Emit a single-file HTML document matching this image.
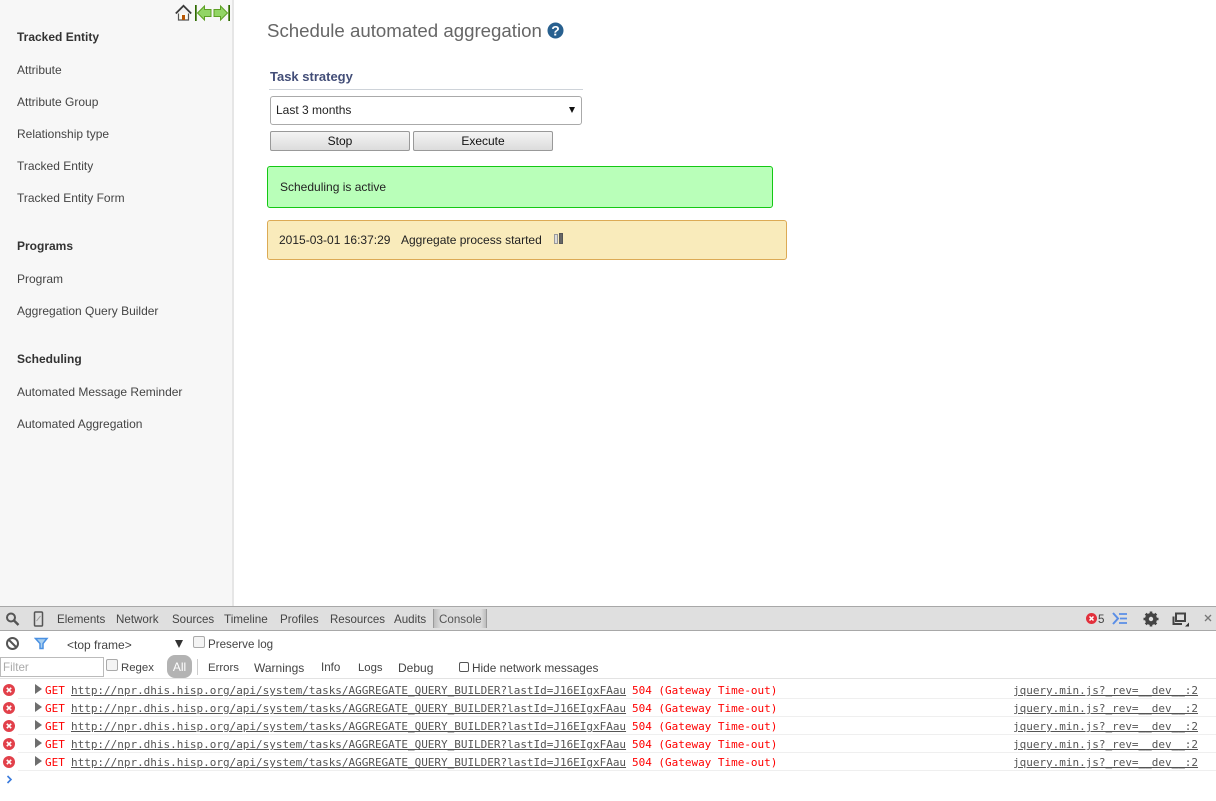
<!DOCTYPE html>
<html><head><meta charset="utf-8"><title>Schedule automated aggregation</title>
<style>
html,body{margin:0;padding:0;background:#fff}
body{width:1216px;height:801px;overflow:hidden;position:relative;font-family:"Liberation Sans",sans-serif;font-size:12px;color:#222}
.a{position:absolute;white-space:nowrap}
#side{position:absolute;left:0;top:0;width:232px;height:606px;background:#f7f7f7;border-right:2px solid #e6e6e6}
.n{position:absolute;left:17px;color:#444;font-size:12px;line-height:14px;white-space:nowrap}
.h{position:absolute;left:17px;color:#333;font-size:12px;font-weight:bold;line-height:14px;white-space:nowrap}
.btn{position:absolute;top:131px;height:18px;border:1px solid #999;border-radius:2px;background:linear-gradient(#f4f4f4,#dcdcdc);text-align:center;line-height:19px;color:#111}
.dt{position:absolute;color:#444;font-size:11.6px;line-height:14px;white-space:nowrap}
.row{position:absolute;left:0;width:1216px;height:18px;font-family:"DejaVu Sans Mono",monospace;font-size:11px;letter-spacing:-.015px;line-height:18px;white-space:pre}
.row span,.row u{position:absolute;top:1px}
.row svg{position:absolute;top:0}
.row u{color:#555}
.row .r{color:#f00}
.ln{position:absolute;left:18px;width:1198px;height:1px;background:#efefef}
.cb{position:absolute;width:10px;height:10px;border:1px solid #aaa;border-radius:2px;background:#f4f4f4}
</style></head><body>
<div id="side">
<div class="h" style="top:30px">Tracked Entity</div>
<div class="n" style="top:63px">Attribute</div>
<div class="n" style="top:95px">Attribute Group</div>
<div class="n" style="top:127px">Relationship type</div>
<div class="n" style="top:159px">Tracked Entity</div>
<div class="n" style="top:191px">Tracked Entity Form</div>
<div class="h" style="top:239px">Programs</div>
<div class="n" style="top:272px">Program</div>
<div class="n" style="top:304px">Aggregation Query Builder</div>
<div class="h" style="top:352px">Scheduling</div>
<div class="n" style="top:385px">Automated Message Reminder</div>
<div class="n" style="top:417px">Automated Aggregation</div>
</div>
<svg class="a" style="left:174px;top:3px" width="58" height="19" viewBox="0 0 58 19">
<path d="M4.500 10 V17 H14.500 V10" fill="#fbfaf2" stroke="#555" stroke-width="1.200"/>
<path d="M1.800 10.500 L9.500 2.800 L17.200 10.500" fill="#f2f2f2" stroke="#3a3a3a" stroke-width="1.800"/>
<rect x="8" y="12" width="3" height="5" fill="#b85500"/>
<rect x="21" y="2" width="1.700" height="16" fill="#2f6b00"/>
<path d="M23.500 10 L30.500 3 V6.500 H37 V13.500 H30.500 V17Z" fill="#92d565" stroke="#5da024" stroke-width="1"/>
<rect x="54.300" y="2" width="1.700" height="16" fill="#2f6b00"/>
<path d="M53.500 10 L46.500 3 V6.500 H40 V13.500 H46.500 V17Z" fill="#92d565" stroke="#5da024" stroke-width="1"/>
</svg>
<div class="a" style="left:267px;top:20px;font-size:18.67px;line-height:22px;color:#666">Schedule automated aggregation</div>
<svg class="a" style="left:547px;top:22px" width="17" height="17" viewBox="0 0 17 17"><circle cx="8.500" cy="8.500" r="8" fill="#28608f"/><text x="8.500" y="13.500" text-anchor="middle" font-family="Liberation Sans,sans-serif" font-weight="bold" font-size="14" fill="#fff">?</text></svg>
<div class="a" style="left:270px;top:69px;font-size:13px;font-weight:bold;line-height:15px;color:#434e78">Task strategy</div>
<div class="a" style="left:269px;top:89px;width:314px;height:1px;background:#ced3d9"></div>
<div class="a" style="left:270px;top:96px;width:310px;height:27px;border:1px solid #aaa;border-radius:3px;background:#fff;line-height:26px;text-indent:5px;color:#222">Last 3 months</div>
<div class="a" style="left:569px;top:107px;width:0;height:0;border-left:3.500px solid transparent;border-right:3.500px solid transparent;border-top:6px solid #111"></div>
<div class="btn" style="left:270px;width:138px">Stop</div>
<div class="btn" style="left:413px;width:138px">Execute</div>
<div class="a" style="left:267px;top:166px;width:504px;height:40px;background:#b9ffb9;border:1px solid #14c814;border-radius:3px;line-height:41px;text-indent:12px;color:#222">Scheduling is active</div>
<div class="a" style="left:267px;top:220px;width:518px;height:38px;background:#f9ebbb;border:1px solid #dcaa55;border-radius:3px;line-height:38px;color:#222"><span style="position:absolute;left:11px">2015-03-01 16:37:29</span><span style="position:absolute;left:133px">Aggregate process started</span></div>
<div class="a" style="left:554px;top:234px;width:2px;height:8px;background:#ddd;border:1px solid #999"></div>
<div class="a" style="left:559px;top:233px;width:2px;height:9px;background:#666;border:1px solid #555"></div>

<div class="a" style="left:0;top:606px;width:1216px;height:23px;background:#dfdfdf;border-top:1px solid #a8a8a8;border-bottom:1px solid #a8a8a8"></div>
<svg class="a" style="left:5px;top:612px" width="16" height="14" viewBox="0 0 16 14"><circle cx="6" cy="5.500" r="4" fill="none" stroke="#555" stroke-width="2"/><path d="M9 8.500 L13.500 13" stroke="#555" stroke-width="2.400"/></svg>
<svg class="a" style="left:33px;top:611px" width="12" height="16" viewBox="0 0 12 16"><rect x="1.500" y="1" width="8" height="14" rx="1" fill="none" stroke="#555" stroke-width="1.500"/><path d="M3.500 10 L7.500 5" stroke="#999"/></svg>
<div class="dt" style="left:57px;top:613px">Elements</div>
<div class="dt" style="left:116px;top:613px">Network</div>
<div class="dt" style="left:172px;top:613px;font-size:11.5px">Sources</div>
<div class="dt" style="left:224px;top:613px;font-size:11.7px">Timeline</div>
<div class="dt" style="left:280px;top:613px">Profiles</div>
<div class="dt" style="left:330px;top:613px;font-size:11.5px">Resources</div>
<div class="dt" style="left:394px;top:613px">Audits</div>
<div class="a" style="left:433px;top:609px;width:54px;height:19px;background:linear-gradient(90deg,#bdbdbd,#dcdcdc 7px,#dcdcdc 47px,#bdbdbd);border-left:1px solid #9a9a9a;border-right:1px solid #9a9a9a;box-sizing:border-box"></div>
<div class="dt" style="left:439px;top:613px;color:#555">Console</div>
<svg class="a" style="left:1086px;top:613px" width="11" height="11" viewBox="0 0 11 11"><circle cx="5.500" cy="5.500" r="5.500" fill="#e2303c"/><path d="M3.500 3.500 L7.500 7.500 M7.500 3.500 L3.500 7.500" stroke="#fff" stroke-width="1.500"/></svg>
<div class="dt" style="left:1098px;top:613px">5</div>
<svg class="a" style="left:1112px;top:612px" width="16" height="13" viewBox="0 0 16 13"><path d="M1 1 L6 6.500 L1 12" fill="none" stroke="#5a8ee6" stroke-width="2"/><path d="M7 2 H15 M8 6.500 H15 M7 11 H15" stroke="#5a8ee6" stroke-width="1.800"/></svg>
<svg class="a" style="left:1143px;top:611px" width="16" height="16" viewBox="0 0 16 16"><circle cx="8" cy="8" r="4.500" fill="none" stroke="#444" stroke-width="3"/><path d="M8 .5 V15.500 M.5 8 H15.500 M2.700 2.700 L13.300 13.300 M13.300 2.700 L2.700 13.300" stroke="#444" stroke-width="2.600"/><circle cx="8" cy="8" r="2.200" fill="#dfdfdf"/></svg>
<svg class="a" style="left:1172px;top:612px" width="18" height="15" viewBox="0 0 18 15"><rect x="4" y="1.500" width="9" height="7.500" fill="none" stroke="#444" stroke-width="2"/><path d="M1.500 4.500 V12 H10" fill="none" stroke="#444" stroke-width="2"/><path d="M17 10.500 V14.500 H13Z" fill="#333"/></svg>
<svg class="a" style="left:1204px;top:614px" width="8" height="8" viewBox="0 0 8 8"><path d="M1 1 L7 7 M7 1 L1 7" stroke="#777" stroke-width="1.300"/></svg>

<svg class="a" style="left:5px;top:636px" width="15" height="15" viewBox="0 0 15 15"><circle cx="7.500" cy="7.500" r="5.500" fill="none" stroke="#555" stroke-width="2"/><path d="M3.500 3.500 L11.500 11.500" stroke="#555" stroke-width="2"/></svg>
<svg class="a" style="left:34px;top:637px" width="15" height="13" viewBox="0 0 15 13"><path d="M1.500 1.500 H13 L9 6.500 V11.500 H6 V6.500Z" fill="#a9d0f0" stroke="#4a90e2" stroke-width="1.500"/></svg>
<div class="dt" style="left:67px;top:638px;font-size:12px">&lt;top frame&gt;</div>
<div class="a" style="left:175px;top:640px;width:0;height:0;border-left:4px solid transparent;border-right:4px solid transparent;border-top:8px solid #333"></div>
<div class="cb" style="left:193px;top:636px"></div>
<div class="dt" style="left:208px;top:638px">Preserve log</div>

<div class="a" style="left:0;top:657px;width:102px;height:18px;border:1px solid #bbb;background:#fff;color:#aaa;line-height:20px;text-indent:2px;font-size:11.6px">Filter</div>
<div class="cb" style="left:106px;top:659px"></div>
<div class="dt" style="left:121px;top:661px;font-size:11.4px">Regex</div>
<div class="a" style="left:167px;top:655px;width:25px;height:23px;background:#b3b3b3;border-radius:8px;color:#fff;text-align:center;line-height:25px">All</div>
<div class="a" style="left:197px;top:659px;width:1px;height:16px;background:#ccc"></div>
<div class="dt" style="left:208px;top:661px;font-size:11.4px">Errors</div>
<div class="dt" style="left:254px;top:661px;font-size:12px">Warnings</div>
<div class="dt" style="left:321px;top:661px">Info</div>
<div class="dt" style="left:358px;top:661px;font-size:11.3px">Logs</div>
<div class="dt" style="left:398px;top:661px;font-size:12px">Debug</div>
<div class="a" style="left:459px;top:662px;width:8px;height:8px;border:1px solid #555;border-radius:2px;background:#fff"></div>
<div class="dt" style="left:472px;top:661px;font-size:11.85px">Hide network messages</div>
<div class="a" style="left:0;top:678px;width:1216px;height:1px;background:#e3e3e3"></div>

<div class="row" style="top:681px"><svg style="left:3px;top:3px" width="12" height="12" viewBox="0 0 11 11"><circle cx="5.500" cy="5.500" r="5.500" fill="#e2404a"/><path d="M3.500 3.500 L7.500 7.500 M7.500 3.500 L3.500 7.500" stroke="#fff" stroke-width="1.500"/></svg><svg style="left:35px;top:3px" width="7" height="10" viewBox="0 0 7 10"><path d="M0 0 L7 5 L0 10Z" fill="#6e6e6e"/></svg><span class="r" style="left:45px">GET</span><u style="left:71px">http://npr.dhis.hisp.org/api/system/tasks/AGGREGATE_QUERY_BUILDER?lastId=J16EIgxFAau</u><span class="r" style="left:632px">504 (Gateway Time-out)</span><u style="left:1013px">jquery.min.js?_rev=__dev__:2</u></div>
<div class="ln" style="top:698px"></div>
<div class="row" style="top:699px"><svg style="left:3px;top:3px" width="12" height="12" viewBox="0 0 11 11"><circle cx="5.500" cy="5.500" r="5.500" fill="#e2404a"/><path d="M3.500 3.500 L7.500 7.500 M7.500 3.500 L3.500 7.500" stroke="#fff" stroke-width="1.500"/></svg><svg style="left:35px;top:3px" width="7" height="10" viewBox="0 0 7 10"><path d="M0 0 L7 5 L0 10Z" fill="#6e6e6e"/></svg><span class="r" style="left:45px">GET</span><u style="left:71px">http://npr.dhis.hisp.org/api/system/tasks/AGGREGATE_QUERY_BUILDER?lastId=J16EIgxFAau</u><span class="r" style="left:632px">504 (Gateway Time-out)</span><u style="left:1013px">jquery.min.js?_rev=__dev__:2</u></div>
<div class="ln" style="top:716px"></div>
<div class="row" style="top:717px"><svg style="left:3px;top:3px" width="12" height="12" viewBox="0 0 11 11"><circle cx="5.500" cy="5.500" r="5.500" fill="#e2404a"/><path d="M3.500 3.500 L7.500 7.500 M7.500 3.500 L3.500 7.500" stroke="#fff" stroke-width="1.500"/></svg><svg style="left:35px;top:3px" width="7" height="10" viewBox="0 0 7 10"><path d="M0 0 L7 5 L0 10Z" fill="#6e6e6e"/></svg><span class="r" style="left:45px">GET</span><u style="left:71px">http://npr.dhis.hisp.org/api/system/tasks/AGGREGATE_QUERY_BUILDER?lastId=J16EIgxFAau</u><span class="r" style="left:632px">504 (Gateway Time-out)</span><u style="left:1013px">jquery.min.js?_rev=__dev__:2</u></div>
<div class="ln" style="top:734px"></div>
<div class="row" style="top:735px"><svg style="left:3px;top:3px" width="12" height="12" viewBox="0 0 11 11"><circle cx="5.500" cy="5.500" r="5.500" fill="#e2404a"/><path d="M3.500 3.500 L7.500 7.500 M7.500 3.500 L3.500 7.500" stroke="#fff" stroke-width="1.500"/></svg><svg style="left:35px;top:3px" width="7" height="10" viewBox="0 0 7 10"><path d="M0 0 L7 5 L0 10Z" fill="#6e6e6e"/></svg><span class="r" style="left:45px">GET</span><u style="left:71px">http://npr.dhis.hisp.org/api/system/tasks/AGGREGATE_QUERY_BUILDER?lastId=J16EIgxFAau</u><span class="r" style="left:632px">504 (Gateway Time-out)</span><u style="left:1013px">jquery.min.js?_rev=__dev__:2</u></div>
<div class="ln" style="top:752px"></div>
<div class="row" style="top:753px"><svg style="left:3px;top:3px" width="12" height="12" viewBox="0 0 11 11"><circle cx="5.500" cy="5.500" r="5.500" fill="#e2404a"/><path d="M3.500 3.500 L7.500 7.500 M7.500 3.500 L3.500 7.500" stroke="#fff" stroke-width="1.500"/></svg><svg style="left:35px;top:3px" width="7" height="10" viewBox="0 0 7 10"><path d="M0 0 L7 5 L0 10Z" fill="#6e6e6e"/></svg><span class="r" style="left:45px">GET</span><u style="left:71px">http://npr.dhis.hisp.org/api/system/tasks/AGGREGATE_QUERY_BUILDER?lastId=J16EIgxFAau</u><span class="r" style="left:632px">504 (Gateway Time-out)</span><u style="left:1013px">jquery.min.js?_rev=__dev__:2</u></div>
<div class="ln" style="top:770px"></div>
<svg class="a" style="left:6px;top:775px" width="7" height="9" viewBox="0 0 7 9"><path d="M1.500 1 L5 4.500 L1.500 8" fill="none" stroke="#3a7bdc" stroke-width="1.600"/></svg>
</body></html>
